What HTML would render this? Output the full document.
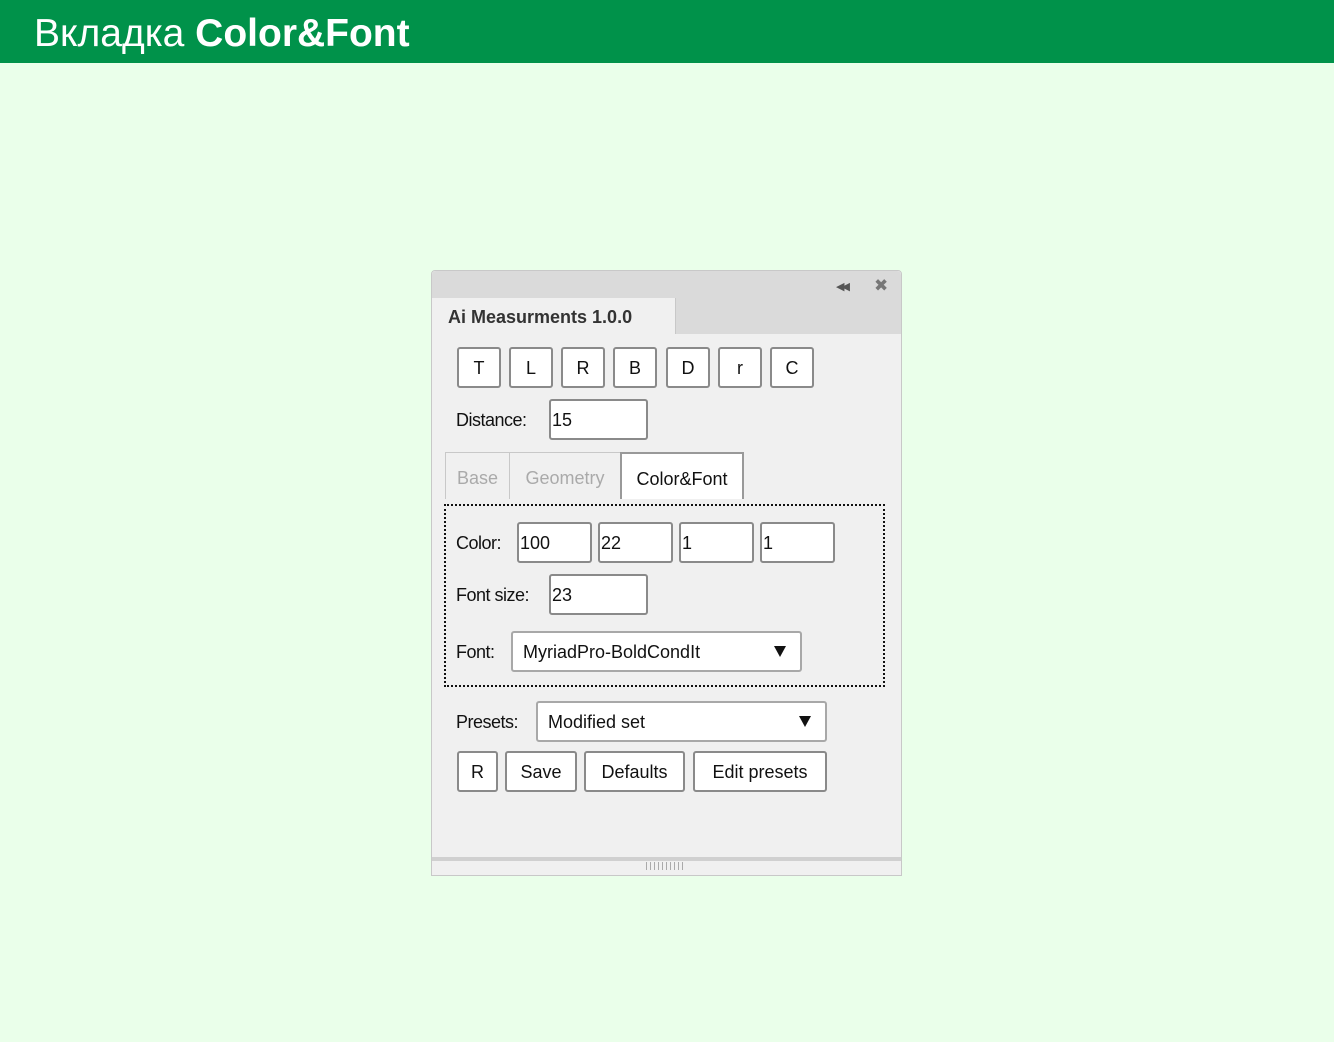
<!DOCTYPE html>
<html><head><meta charset="utf-8"><style>
*{margin:0;padding:0;box-sizing:border-box}
body{width:1334px;height:1042px;background:#eaffea;position:relative;overflow:hidden;font-family:"Liberation Sans","DejaVu Sans",sans-serif}
.hdr{position:absolute;left:0;top:0;width:1334px;height:63px;background:#00924a;color:#fff;font-size:39px;line-height:68px;padding-left:34px;white-space:nowrap}
.a{position:absolute}
.btn,.inp,.sel{position:absolute;background:#fff;border:2px solid #8a8a8a;border-radius:3px;font-size:18px;color:#111}
.btn{text-align:center;line-height:39px}
.inp{line-height:39px;padding-left:1px}
.sel{line-height:38px;padding-left:10px;border-color:#a8a8a8}
.sel:after{content:"";position:absolute;right:14px;top:13px;border-left:6px solid transparent;border-right:6px solid transparent;border-top:11px solid #111}
.lbl{position:absolute;font-size:18px;color:#111;letter-spacing:-0.5px}
.tab{position:absolute;top:452px;height:47px;border:1px solid #c8c8c8;border-bottom:none;font-size:18px;line-height:50px;text-align:center;color:#aaa;background:#f0f0f0}
</style></head><body>
<div class="hdr">Вкладка <b>Color&amp;Font</b></div>
<div class="a" style="left:431px;top:270px;width:471px;height:606px;background:#f0f0f0;border:1px solid #c8c8c8;border-radius:4px 4px 0 0"></div>
<div class="a" style="left:432px;top:271px;width:469px;height:27px;background:#dadada;border-radius:4px 4px 0 0"></div>
<div class="a" style="left:836px;top:280px;font-size:11px;color:#555;letter-spacing:-3px;font-weight:bold">◀◀</div>
<div class="a" style="left:874px;top:276px;font-size:17px;color:#777;font-weight:bold">✖</div>
<div class="a" style="left:675px;top:298px;width:226px;height:36px;background:#dadada;border-left:1px solid #c8c8c8"></div>
<div class="a" style="left:448px;top:307px;font-size:18px;font-weight:bold;color:#333">Ai Measurments 1.0.0</div>

<div class="btn" style="left:457px;top:347px;width:44px;height:41px">T</div>
<div class="btn" style="left:509px;top:347px;width:44px;height:41px">L</div>
<div class="btn" style="left:561px;top:347px;width:44px;height:41px">R</div>
<div class="btn" style="left:613px;top:347px;width:44px;height:41px">B</div>
<div class="btn" style="left:666px;top:347px;width:44px;height:41px">D</div>
<div class="btn" style="left:718px;top:347px;width:44px;height:41px">r</div>
<div class="btn" style="left:770px;top:347px;width:44px;height:41px">C</div>

<div class="lbl" style="left:456px;top:410px">Distance:</div>
<div class="inp" style="left:549px;top:399px;width:99px;height:41px">15</div>

<div class="tab" style="left:445px;width:65px">Base</div>
<div class="tab" style="left:509px;width:112px">Geometry</div>
<div class="tab" style="left:620px;width:124px;background:#fff;color:#111;border-color:#999;border-width:2px">Color&amp;Font</div>

<div class="a" style="left:444px;top:504px;width:441px;height:183px;border:2px dotted #111"></div>
<div class="lbl" style="left:456px;top:533px">Color:</div>
<div class="inp" style="left:517px;top:522px;width:75px;height:41px">100</div>
<div class="inp" style="left:598px;top:522px;width:75px;height:41px">22</div>
<div class="inp" style="left:679px;top:522px;width:75px;height:41px">1</div>
<div class="inp" style="left:760px;top:522px;width:75px;height:41px">1</div>
<div class="lbl" style="left:456px;top:585px">Font size:</div>
<div class="inp" style="left:549px;top:574px;width:99px;height:41px">23</div>
<div class="lbl" style="left:456px;top:642px">Font:</div>
<div class="sel" style="left:511px;top:631px;width:291px;height:41px">MyriadPro-BoldCondIt</div>

<div class="lbl" style="left:456px;top:712px">Presets:</div>
<div class="sel" style="left:536px;top:701px;width:291px;height:41px">Modified set</div>
<div class="btn" style="left:457px;top:751px;width:41px;height:41px">R</div>
<div class="btn" style="left:505px;top:751px;width:72px;height:41px">Save</div>
<div class="btn" style="left:584px;top:751px;width:101px;height:41px">Defaults</div>
<div class="btn" style="left:693px;top:751px;width:134px;height:41px">Edit presets</div>

<div class="a" style="left:432px;top:857px;width:469px;height:4px;background:#d0d0d0"></div>
<div class="a" style="left:646px;top:862px;width:40px;height:8px;background:repeating-linear-gradient(90deg,#aaa 0 1px,transparent 1px 4px)"></div>
</body></html>
